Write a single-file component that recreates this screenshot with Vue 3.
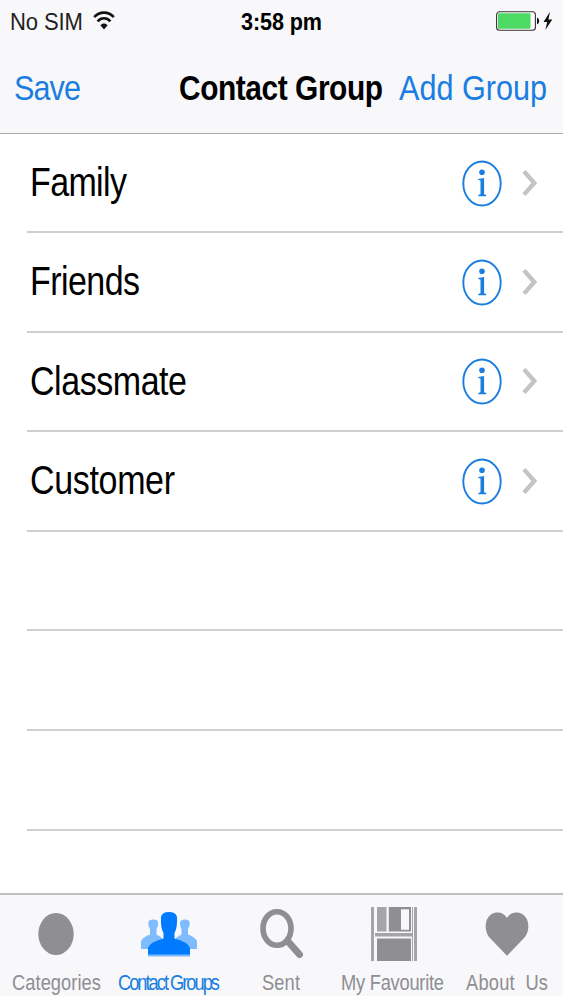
<template>
  <div class="screen">
    <header class="top">
      <div class="status-bar">
        <NarrowText class="no-sim" text="No SIM" :width="73" :size="24.5" :squeeze="0.9" />
        <svg class="wifi" width="22" height="19" viewBox="0 0 22 19">
          <path d="M1.2 6.1C6.5 .1 15.5 .1 20.8 6.1" />
          <path d="M4.6 10.3C8.2 6.3 13.8 6.3 17.4 10.3" />
          <path class="dot" d="M7.4 14.2C9.5 12 12.5 12 14.6 14.2L11 18.5Z" />
        </svg>
        <NarrowText class="time" text="3:58 pm" :width="81" :size="24.5" :squeeze="0.88" bold />
        <svg class="battery" width="58" height="22" viewBox="0 0 58 22">
          <rect x=".6" y=".7" width="38.8" height="18.6" rx="3" fill="#fff" stroke="#333" stroke-width="1.1" />
          <rect x="2" y="2.2" width="32.5" height="15.6" rx="1" fill="#4cd964" />
          <path d="M41 6.5Q43.2 7.2 43.2 10T41 13.5Z" fill="#111" />
          <path d="M54 .8L47.5 11H51.2L49.3 19L56.3 8.4H52.4Z" fill="#111" />
        </svg>
      </div>
      <nav class="nav-bar">
        <NarrowText class="save" text="Save" :width="67" :size="36" />
        <NarrowText class="title" text="Contact Group" :width="204" :size="36" :squeeze="0.83" bold />
        <NarrowText class="add" text="Add Group" :width="148" :size="36" />
      </nav>
    </header>

    <main class="list">
      <div v-for="(group, index) in groups" :key="index" class="row">
        <template v-if="group">
          <NarrowText class="name" :text="group.name" :width="group.width" :size="40" />
          <svg class="info" width="40" height="47" viewBox="0 0 40 47">
            <ellipse cx="20" cy="23.5" rx="18.7" ry="22" />
            <circle cx="20" cy="12.2" r="2.8" />
            <path d="M16.3 19L22.1 17.9V34.3L24.2 35V36.2H16.3V35L18.5 34.3V20.6L16.3 20.1Z" />
          </svg>
          <svg class="chevron" width="16" height="28" viewBox="0 0 16 28">
            <path d="M2 2.4L12.3 14L2 25.6" />
          </svg>
        </template>
      </div>
    </main>

    <footer class="tab-bar">
      <div v-for="tab in tabs" :key="tab.label" class="tab" :class="{ active: tab.active }">
        <svg class="tab-icon" width="60" height="60" viewBox="0 0 60 60">
          <ellipse v-if="tab.icon === 'circle'" cx="30" cy="29" rx="17.7" ry="21" />
          <template v-else-if="tab.icon === 'people'">
            <g fill="#7fbcff">
              <path d="M2 44V36Q4 32 11 29.5V24Q9 21 9.3 17Q10 14.5 14.3 14.5T19 17Q19.5 21 17.5 24V29.5Q21 31 23 33V44Z" />
              <path d="M58 44V36Q56 32 49 29.5V24Q51 21 50.7 17Q50 14.5 46 14.5T41 17Q40.5 21 42.5 24V29.5Q39 31 37 33V44Z" />
              <path d="M9 48H51V51.5H9Z" />
            </g>
            <path
              fill="#007aff"
              d="M9 49.5V43Q11 37 24.5 33.5V28Q21.5 23 22 12Q23 7 30 7T38 12Q38.5 23 35.5 28V33.5Q49 37 51 43V49.5Z"
            />
          </template>
          <template v-else-if="tab.icon === 'search'">
            <ellipse cx="26" cy="23.5" rx="14" ry="16.8" fill="none" stroke="#8e8e93" stroke-width="5.6" />
            <path d="M37.5 37L48.5 49.5" stroke="#8e8e93" stroke-width="7" stroke-linecap="round" />
          </template>
          <template v-else-if="tab.icon === 'floppy'">
            <path d="M7 2H53V56H7Z" fill="#a5a5a9" />
            <path d="M11 2H48V28H11ZM11 31.5H48V56H11Z" fill="#f8f7fb" />
            <path d="M13 2H22.5V26.5H13Z" fill="#a5a5a9" />
            <path d="M24.8 2H47V26.5H24.8Z" />
            <path d="M37 4.3H45V24.8H37Z" fill="#f8f7fb" />
            <path d="M13 33.5H47V56H13Z" />
            <path d="M10.5 2V56M49.5 2V56" stroke="#f8f7fb" stroke-width="1" />
          </template>
          <path
            v-else
            d="M30 50.8L12 32C7 25 7.5 14 14 9.5C20 5.7 27 7.5 30 13C33 7.5 40 5.7 46 9.5C52.5 14 53 25 48 32Z"
          />
        </svg>
        <NarrowText class="tab-label" :text="tab.label" :width="tab.width" :size="21.5" />
      </div>
    </footer>
  </div>
</template>

<script setup>
import { h } from 'vue'

// condensed text: glyphs are squeezed, spacing makes up the rest of the width
const NarrowText = (props) => {
  const squeeze = props.squeeze || 0.85
  return h('svg', { width: props.width, height: props.size, overflow: 'visible' }, [
    h(
      'text',
      {
        x: 0,
        y: props.size * 0.85,
        'font-size': props.size,
        'font-weight': props.bold ? 700 : 400,
        textLength: props.width / squeeze,
        lengthAdjust: 'spacing',
        transform: `scale(${squeeze} 1)`,
        fill: 'currentColor',
        style: 'white-space: pre',
      },
      props.text
    ),
  ])
}
NarrowText.props = {
  text: String,
  width: Number,
  size: Number,
  squeeze: Number,
  bold: Boolean,
}

const groups = [
  { name: 'Family', width: 97 },
  { name: 'Friends', width: 110 },
  { name: 'Classmate', width: 157 },
  { name: 'Customer', width: 145 },
  null,
  null,
  null,
]

const tabs = [
  { label: 'Categories', icon: 'circle', width: 89 },
  { label: 'Contact Groups', icon: 'people', width: 102, active: true },
  { label: 'Sent', icon: 'search', width: 38 },
  { label: 'My Favourite', icon: 'floppy', width: 103 },
  { label: 'About  Us', icon: 'heart', width: 82 },
]
</script>

<style>
body {
  margin: 0;
  background: #fff;
}
</style>

<style scoped>
.screen {
  width: 563px;
  height: 1000px;
  display: flex;
  flex-direction: column;
  overflow: hidden;
  background: #fff;
  font-family: "Liberation Sans", Arial, sans-serif;
  color: #000;
}
svg {
  display: block;
  flex-shrink: 0;
}
.top {
  box-sizing: border-box;
  height: 134px;
  background: #f8f7fa;
  border-bottom: 1px solid #a9a9ac;
}
.status-bar {
  height: 44px;
  display: flex;
  align-items: flex-start;
  padding-left: 10px;
}
.no-sim,
.time {
  margin-top: 9px;
}
.no-sim {
  color: #222;
}
.wifi {
  margin: 11px 0 0 10px;
  fill: none;
  stroke: #111;
  stroke-width: 2.6;
}
.wifi .dot {
  fill: #111;
  stroke: none;
}
.time {
  margin-left: 126px;
}
.battery {
  margin: 11px 0 0 174px;
}
.nav-bar {
  display: flex;
  padding: 25px 0 0 14px;
}
.save,
.add {
  color: #1a7ee0;
}
.title {
  margin-left: 98px;
}
.add {
  margin-left: 16px;
}
.list {
  flex: 1;
  padding-left: 27px;
}
.row {
  box-sizing: border-box;
  height: 99.6px;
  display: flex;
  align-items: center;
  border-bottom: 2px solid #cfcfd1;
}
.row:first-child {
  height: 99px;
}
.name {
  margin: 0 auto 1px 3px;
}
.info {
  margin-top: 1px;
  fill: #1a7ee0;
}
.info ellipse {
  fill: none;
  stroke: #1a7ee0;
  stroke-width: 1.9;
}
.chevron {
  margin: 0 25px 0 20px;
  fill: none;
  stroke: #c4c4c7;
  stroke-width: 4.4;
}
.tab-bar {
  box-sizing: border-box;
  height: 103px;
  margin-bottom: 4px;
  display: flex;
  background: #f8f7fa;
  border-top: 2px solid #c0c0c3;
}
.tab {
  flex: 1;
  display: flex;
  flex-direction: column;
  align-items: center;
  color: #8e8e93;
  fill: #8e8e93;
}
.tab.active {
  color: #1a7ee0;
}
.tab-icon {
  margin-top: 10px;
}
.tab-label {
  margin-top: 7px;
}
.tab:nth-child(4) .tab-label {
  margin-right: 3px;
}
</style>
